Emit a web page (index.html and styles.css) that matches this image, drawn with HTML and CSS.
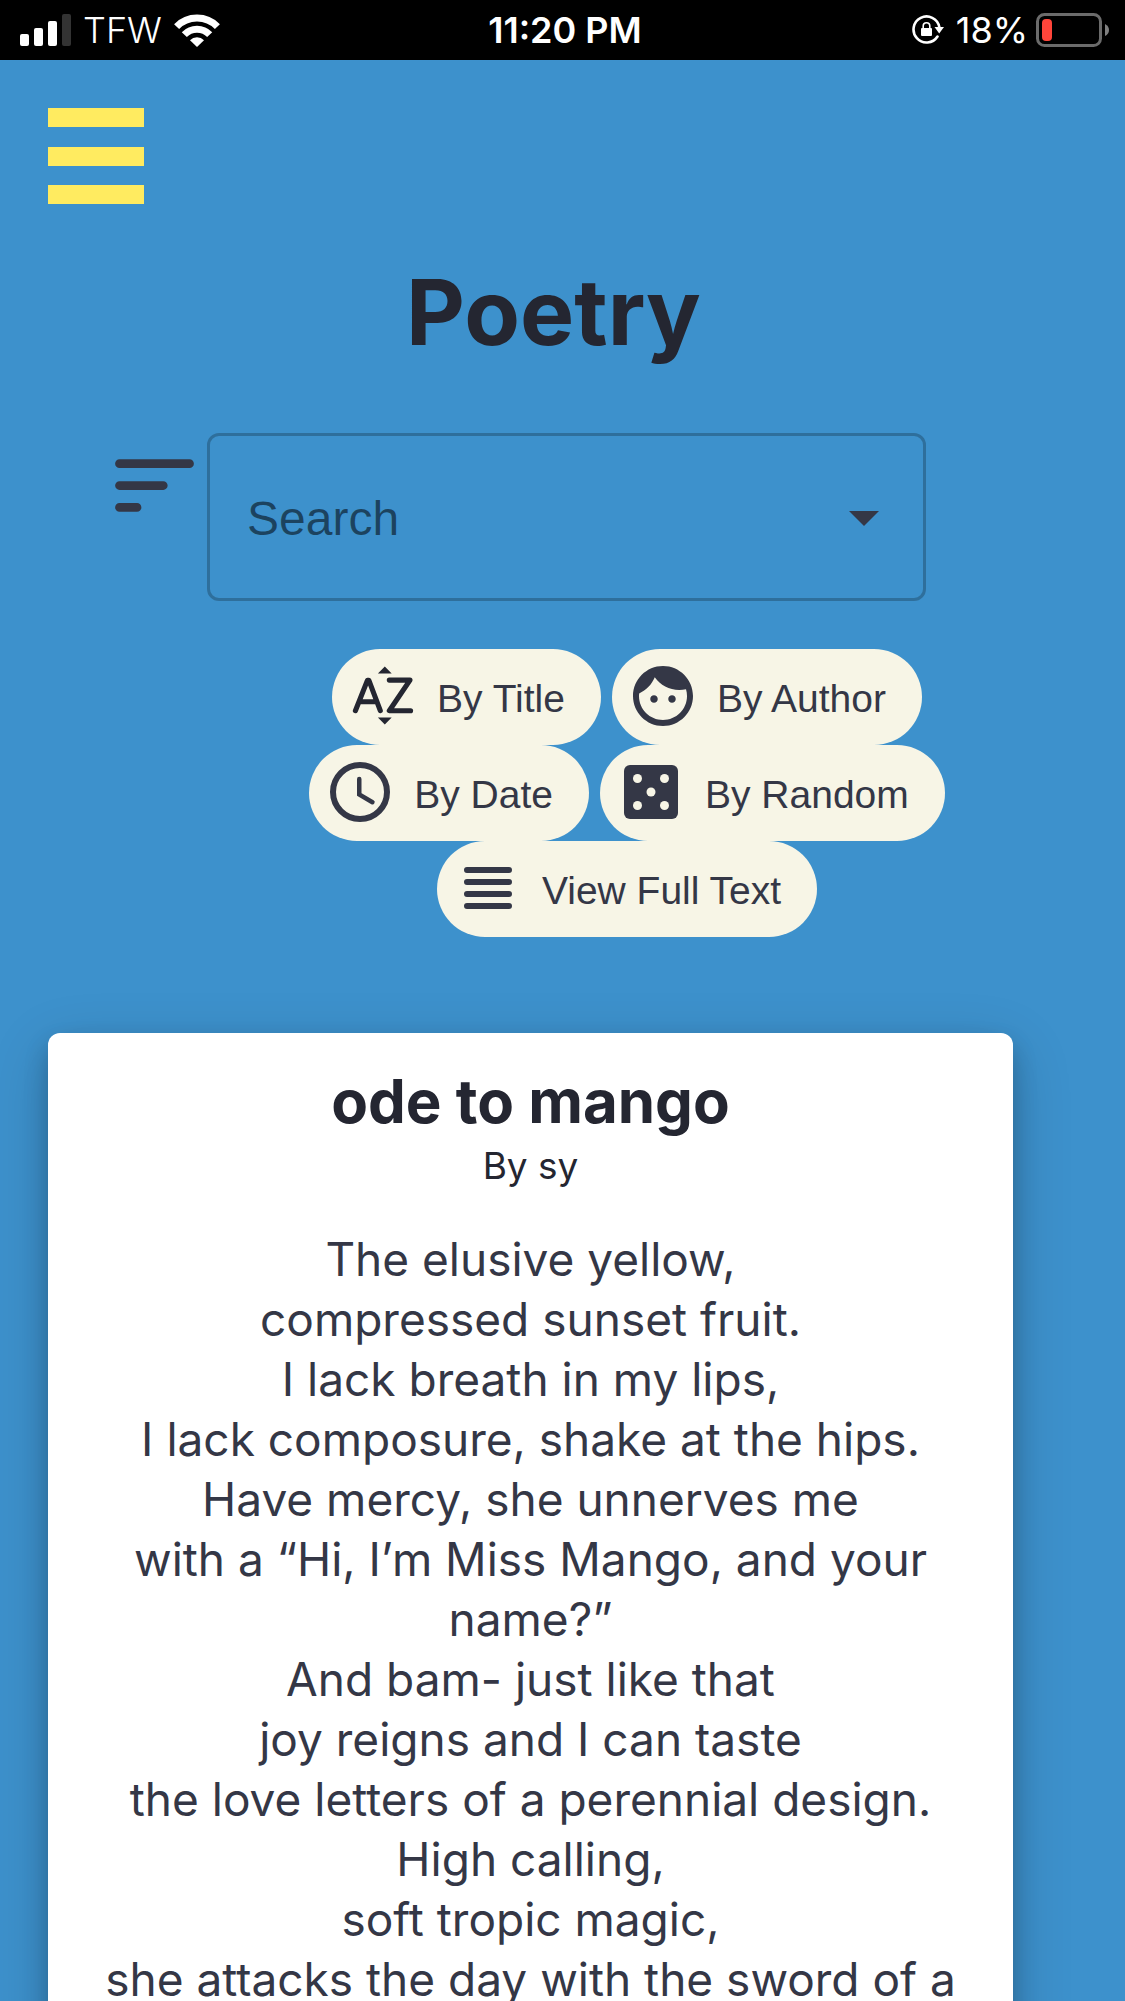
FILE: index.html
```html
<!DOCTYPE html>
<html lang="en">
<head>
<meta charset="utf-8">
<meta name="viewport" content="width=device-width, initial-scale=1">
<title>Poetry</title>
<link rel="stylesheet" href="styles.css">
</head>
<body>
<div class="screen">
  <div class="status">
    <div class="status-left">
      <svg class="signal" viewBox="0 0 51 32" aria-hidden="true">
        <rect x="0" y="20" width="9" height="12" rx="2" fill="#fff"/>
        <rect x="14" y="14" width="9" height="18" rx="2" fill="#fff"/>
        <rect x="28" y="7" width="9" height="25" rx="2" fill="#fff"/>
        <rect x="42" y="0" width="9" height="32" rx="2" fill="#333"/>
      </svg>
      <span class="carrier">TFW</span>
      <svg class="wifi" viewBox="0 0 46 33" aria-hidden="true">
        <g fill="none" stroke="#fff" stroke-width="7">
          <path d="M2.6 12.6A28.5 28.5 0 0 1 43.4 12.6"/>
          <path d="M10.3 20.6A17.5 17.5 0 0 1 35.7 20.6"/>
        </g>
        <path fill="#fff" d="M16 26.2A9.8 9.8 0 0 1 30 26.2L23 33z"/>
      </svg>
    </div>
    <time class="clock">11:20 PM</time>
    <div class="status-right">
      <svg class="lock" viewBox="0 0 32 30" aria-hidden="true">
        <path d="M25.5 21.5A13 13 0 1 1 27.3 12" fill="none" stroke="#fff" stroke-width="2.6" stroke-linecap="round"/>
        <path d="M22.5 12H32L27.2 18.5z" fill="#fff"/>
        <rect x="9" y="13" width="11" height="8" rx="1" fill="#fff"/>
        <path d="M11.2 13.5V11a3.3 3.3 0 0 1 6.6 0v2.5" fill="none" stroke="#fff" stroke-width="1.6"/>
      </svg>
      <span class="percent">18%</span>
      <svg class="battery" viewBox="0 0 74 34" aria-hidden="true">
        <rect x="1.5" y="1.5" width="63" height="31" rx="7" fill="none" stroke="#6b6b6b" stroke-width="3"/>
        <rect x="6" y="6" width="10" height="22" rx="4" fill="#ff453a"/>
        <path d="M69 11q4 2 4 6t-4 6z" fill="#808080"/>
      </svg>
    </div>
  </div>

  <main class="content">
    <button class="menu" type="button" aria-label="Menu"><span></span><span></span><span></span></button>
    <h1 class="title">Poetry</h1>

    <div class="search-row">
      <svg class="sort" viewBox="0 0 24 24" aria-hidden="true">
        <path d="M4 7h16M4 12h10M4 17h4" fill="none" stroke="currentColor" stroke-width="2" stroke-linecap="round"/>
      </svg>
      <div class="search">
        <input class="search-input" type="text" placeholder="Search" aria-label="Search">
        <button class="search-open" type="button" aria-label="Open">
          <svg class="icon" viewBox="0 0 24 24"><path fill="currentColor" d="M7 10l5 5 5-5z"/></svg>
        </button>
      </div>
    </div>

    <div class="chips">
      <button class="chip" type="button">
        <svg class="icon icon-dark" viewBox="0 0 24 24" aria-hidden="true">
          <path fill="currentColor" d="M12.6 2.2l2.3 2.3h-4.6zM12.6 21.5l-2.3-2.3h4.6z"/>
          <path fill="none" stroke="currentColor" stroke-width="1.7" stroke-linecap="round" stroke-linejoin="round" d="M2.8 16.9L6.8 6.8h.5L11.1 16.9M4.2 13.9h5.5M14.1 6.7h6.9L14.1 16.9h7.1"/>
        </svg>
        <span class="chip-label">By Title</span>
      </button>
      <button class="chip" type="button">
        <svg class="icon" viewBox="0 0 24 24" aria-hidden="true">
          <path fill="currentColor" d="M9 11.75c-.69 0-1.25.56-1.25 1.25s.56 1.25 1.25 1.25 1.25-.56 1.25-1.25-.56-1.25-1.25-1.25zm6 0c-.69 0-1.25.56-1.25 1.25s.56 1.25 1.25 1.25 1.25-.56 1.25-1.25-.56-1.25-1.25-1.25zM12 2C6.48 2 2 6.48 2 12s4.48 10 10 10 10-4.48 10-10S17.52 2 12 2zm0 18c-4.41 0-8-3.59-8-8 0-.29.02-.58.05-.86 2.36-1.05 4.23-2.98 5.21-5.37C11.07 8.33 14.05 10 17.42 10c.78 0 1.53-.09 2.25-.26.21.71.33 1.47.33 2.26 0 4.41-3.59 8-8 8z"/>
        </svg>
        <span class="chip-label">By Author</span>
      </button>
      <button class="chip" type="button">
        <svg class="icon" viewBox="0 0 24 24" aria-hidden="true">
          <circle cx="12" cy="12" r="9" fill="none" stroke="currentColor" stroke-width="2"/>
          <path d="M11.75 7.7v5.1l4.4 2.6" fill="none" stroke="currentColor" stroke-width="1.5" stroke-linecap="round"/>
        </svg>
        <span class="chip-label">By Date</span>
      </button>
      <button class="chip" type="button">
        <svg class="icon" viewBox="0 0 24 24" aria-hidden="true">
          <rect x="3" y="3" width="18" height="18" rx="2" fill="currentColor"/>
          <g fill="#f7f5e6">
            <circle cx="7.5" cy="7.5" r="1.5"/><circle cx="16.5" cy="7.5" r="1.5"/><circle cx="12" cy="12" r="1.5"/><circle cx="7.5" cy="16.5" r="1.5"/><circle cx="16.5" cy="16.5" r="1.5"/>
          </g>
        </svg>
        <span class="chip-label">By Random</span>
      </button>
      <button class="chip" type="button">
        <svg class="icon" viewBox="0 0 24 24" aria-hidden="true">
          <path d="M5 6h14M5 10h14M5 14h14M5 18h14" fill="none" stroke="currentColor" stroke-width="2" stroke-linecap="round"/>
        </svg>
        <span class="chip-label">View Full Text</span>
      </button>
    </div>

    <article class="card">
      <h2 class="poem-title">ode to mango</h2>
      <p class="author">By sy</p>
      <p class="poem">The elusive yellow,<br>
        compressed sunset fruit.<br>
        I lack breath in my lips,<br>
        I lack composure, shake at the hips.<br>
        Have mercy, she unnerves me<br>
        with a “Hi, I’m Miss Mango, and your name?”<br>
        And bam- just like that<br>
        joy reigns and I can taste<br>
        the love letters of a perennial design.<br>
        High calling,<br>
        soft tropic magic,<br>
        she attacks the day with the sword of a</p>
    </article>
  </main>
</div>
</body>
</html>
```
FILE: styles.css
```css
* {
  box-sizing: border-box;
}

body {
  margin: 0;
  font-family: Inter, "Liberation Sans", sans-serif;
  color: #343746;
  background: #3d91cc;
}

button {
  padding: 0;
  border: 0;
  background: none;
  font: inherit;
  color: inherit;
}

svg {
  flex: none;
}

.screen {
  display: flex;
  flex-direction: column;
  height: 100vh;
}

/* Status bar */
.status {
  flex: none;
  display: grid;
  grid-template-columns: 1fr auto 1fr;
  align-items: center;
  height: 60px;
  padding: 0 15px 0 20px;
  background: #000;
  color: #fff;
  font-size: 36px;
}

.status-left,
.status-right {
  display: flex;
  align-items: center;
}

.status-right {
  justify-content: flex-end;
}

.signal {
  width: 51px;
  height: 32px;
}

.carrier {
  margin: 0 12px;
  font-weight: 300;
}

.wifi {
  width: 46px;
  height: 33px;
}

.clock {
  font-weight: 600;
}

.lock {
  width: 32px;
  height: 30px;
}

.percent {
  margin: 0 8px 0 12px;
}

.battery {
  width: 74px;
  height: 34px;
}

/* Page */
.content {
  flex: 1;
  min-height: 0;
  overflow-y: auto;
  scrollbar-width: none;
}

.menu {
  display: flex;
  flex-direction: column;
  justify-content: space-between;
  width: 96px;
  height: 96px;
  margin: 48px 0 0 48px;
}

.menu span {
  height: 19px;
  background: #ffeb60;
}

.title {
  margin: 48px 66px 0 48px;
  font-size: 91px;
  line-height: 120px;
  font-weight: 700;
  text-align: center;
  color: #242631;
}

.search-row {
  display: flex;
  align-items: flex-start;
  margin: 61px 199px 0 102px;
}

.sort {
  width: 105px;
  height: 105px;
}

.search {
  flex: 1;
  min-width: 0;
  display: flex;
  align-items: center;
  height: 168px;
  padding: 0 23px 0 37px;
  border: 3px solid rgba(0, 0, 0, 0.23);
  border-radius: 12px;
}

.search-input {
  flex: 1;
  min-width: 0;
  height: 72px;
  padding: 2px 0 0;
  border: 0;
  outline: 0;
  background: none;
  color: #343746;
  font-family: "Liberation Sans", Arial, sans-serif;
  font-size: 48px;
}

.search-input::placeholder {
  color: rgba(0, 0, 0, 0.54);
  opacity: 1;
}

.icon {
  display: block;
  width: 72px;
  height: 72px;
}

.icon-dark {
  color: #242631;
}

.chips {
  display: flex;
  flex-wrap: wrap;
  justify-content: center;
  column-gap: 11px;
  margin: 48px 78px 0 207px;
}

.chip {
  display: flex;
  align-items: center;
  gap: 18px;
  height: 96px;
  padding: 0 36px 2px 15px;
  border-radius: 48px;
  background: #f7f5e6;
  font-family: "Liberation Sans", Arial, sans-serif;
  font-size: 39px;
}

.chip-label {
  padding-top: 5px;
}

.card {
  margin: 96px 112px 48px 48px;
  padding: 32px 48px 48px;
  border-radius: 12px;
  background: #fff;
  box-shadow: 0 12px 24px rgba(0, 0, 0, 0.2), 0 18px 60px rgba(0, 0, 0, 0.19);
  text-align: center;
}

.poem-title {
  margin: 0;
  font-size: 60px;
  line-height: 72px;
  font-weight: 700;
  color: #242631;
}

.author {
  margin: 0;
  font-size: 37px;
  line-height: 58px;
  color: #242631;
}

.poem {
  margin: 34px 0 0;
  font-size: 46px;
  line-height: 60px;
}
```
